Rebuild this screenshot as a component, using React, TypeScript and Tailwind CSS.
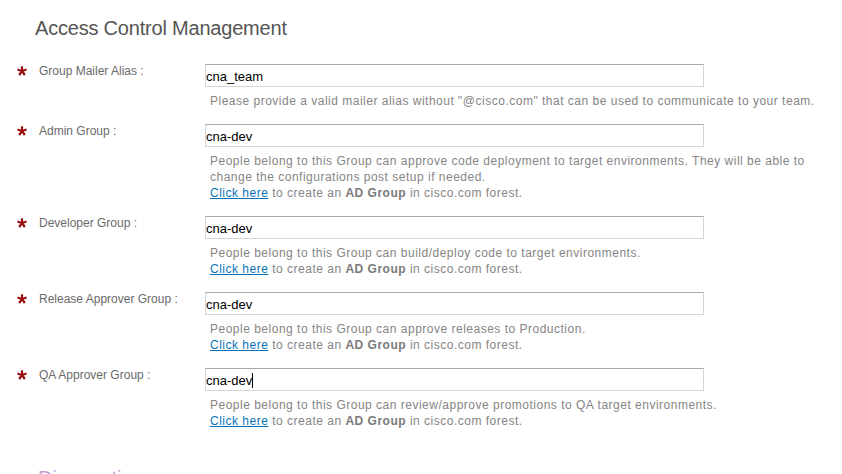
import React from "react";

function Asterisk() {
  return (
    <svg width="10" height="10" viewBox="0 0 10 10" className="mt-[2px] block">
      <g stroke="#9a0f0f" strokeWidth="2.2" strokeLinecap="butt">
        <line x1="5" y1="5" x2="5" y2="0.3" />
        <line x1="5" y1="5" x2="9.6" y2="3.5" />
        <line x1="5" y1="5" x2="7.8" y2="9" />
        <line x1="5" y1="5" x2="2.2" y2="9" />
        <line x1="5" y1="5" x2="0.4" y2="3.5" />
      </g>
    </svg>
  );
}

function ADLine() {
  return (
    <div>
      <a href="#" className="text-[#0a72b8] underline">Click here</a> to create an{" "}
      <b className="font-bold text-[#7a7a7a]">AD Group</b> in cisco.com forest.
    </div>
  );
}

type RowProps = {
  label: string;
  value: string;
  caret?: boolean;
  children: React.ReactNode;
};

function Row({ label, value, caret, children }: RowProps) {
  return (
    <div className="flex pl-[17px]">
      <div className="w-[22px] shrink-0">
        <Asterisk />
      </div>
      <div className="w-[166px] shrink-0 text-[12px] leading-[12px] mt-[1px] text-[#6a6a6a]">{label}</div>
      <div className="flex flex-col">
        <div className="w-[499px] h-[23px] box-border border border-[#d6d6d6] border-t-[#a9a9a9] bg-white pt-[1px] text-[13px] leading-[21px] text-black overflow-hidden whitespace-nowrap flex">
          <span>{value}</span>
          {caret && <span className="inline-block w-[1px] h-[15px] bg-black mt-[3px]" />}
        </div>
        <div className="ml-[5px] mt-[6px] w-[612px] text-[12px] leading-[16px] tracking-[0.5px] text-[#858585]">{children}</div>
      </div>
    </div>
  );
}

export default function App() {
  return (
    <div className="w-[842px] h-[474px] overflow-hidden bg-white font-['Liberation_Sans',Arial,sans-serif]">
      <h1 className="pl-[35px] pt-[16px] text-[20px] leading-[24px] tracking-[-0.2px] font-normal text-[#555]">
        Access Control Management
      </h1>
      <div className="mt-[24px] flex flex-col gap-[15px]">
        <Row label="Group Mailer Alias :" value="cna_team">
          <div>Please provide a valid mailer alias without "@cisco.com" that can be used to communicate to your team.</div>
        </Row>
        <Row label="Admin Group :" value="cna-dev">
          <div>People belong to this Group can approve code deployment to target environments. They will be able to change the configurations post setup if needed.</div>
          <ADLine />
        </Row>
        <Row label="Developer Group :" value="cna-dev">
          <div>People belong to this Group can build/deploy code to target environments.</div>
          <ADLine />
        </Row>
        <Row label="Release Approver Group :" value="cna-dev">
          <div>People belong to this Group can approve releases to Production.</div>
          <ADLine />
        </Row>
        <Row label="QA Approver Group :" value="cna-dev" caret>
          <div>People belong to this Group can review/approve promotions to QA target environments.</div>
          <ADLine />
        </Row>
      </div>
      <h2 className="pl-[38px] mt-[37px] text-[20px] leading-[24px] font-normal text-[#c99bd6]">
        Diagnostics
      </h2>
    </div>
  );
}
